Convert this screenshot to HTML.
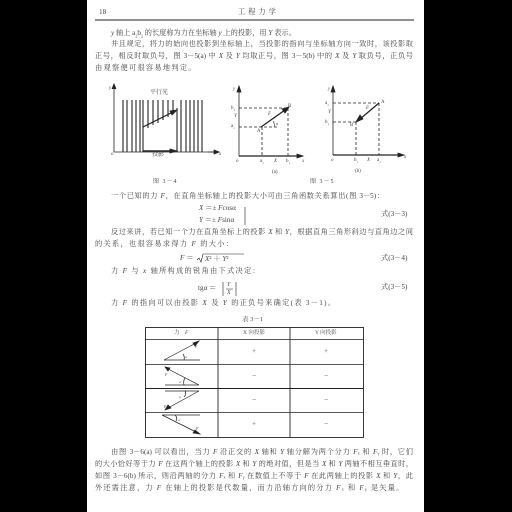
<!DOCTYPE html>
<html><head><meta charset="utf-8"><style>
html,body{margin:0;padding:0;background:#000;width:512px;height:512px;overflow:hidden}
#pg{position:absolute;left:87px;top:0;width:337px;height:512px;background:#fff}
.t{position:absolute;font-family:"Liberation Serif","Noto Serif CJK SC",serif;font-size:7.2px;color:#444;white-space:nowrap;line-height:9px}
.j{text-align:justify;text-align-last:justify;white-space:normal;height:9px;overflow:hidden}
i{font-style:italic}
svg{position:absolute;left:0;top:0}
</style></head><body>
<div id="pg"></div>
<svg width="512" height="512" viewBox="0 0 512 512" fill="none" stroke="#222" stroke-width="0.8">
<line x1="95" y1="20" x2="414" y2="20" stroke-width="1"/>
<line x1="114" y1="152" x2="114" y2="86"/><path d="M112 89 L114 84 L116 89" fill="#222"/>
<line x1="114" y1="152" x2="216" y2="152"/>
<g stroke-width="1.1">
<line x1="123" y1="100" x2="123" y2="152"/><line x1="127" y1="100" x2="127" y2="152"/><line x1="132" y1="100" x2="132" y2="152"/><line x1="136" y1="100" x2="136" y2="152"/><line x1="140" y1="100" x2="140" y2="152"/><line x1="143" y1="100" x2="143" y2="152"/>
<line x1="148" y1="100" x2="148" y2="128"/><line x1="153" y1="100" x2="153" y2="125"/><line x1="158" y1="100" x2="158" y2="123"/><line x1="163" y1="100" x2="163" y2="120"/><line x1="168" y1="100" x2="168" y2="117"/><line x1="173" y1="100" x2="173" y2="114"/>
<line x1="177" y1="108" x2="177" y2="152"/><line x1="181" y1="100" x2="181" y2="152"/><line x1="186" y1="100" x2="186" y2="152"/><line x1="190" y1="100" x2="190" y2="152"/><line x1="194" y1="100" x2="194" y2="152"/><line x1="198" y1="100" x2="198" y2="152"/><line x1="202" y1="100" x2="202" y2="152"/>
</g>
<line x1="143" y1="127" x2="175" y2="111" stroke-width="1.2"/><path d="M177 110 L170 111 L172 115Z" fill="#222"/>
<line x1="143" y1="151" x2="172" y2="151" stroke-width="1.4"/><path d="M177 151 L170 149 L170 153Z" fill="#222"/>
<line x1="208" y1="152" x2="218" y2="152"/><path d="M219 152 L214 150 L214 154Z" fill="#222"/>
<line x1="239" y1="156" x2="239" y2="90"/><path d="M237 92 L239 86 L241 92Z" fill="#222"/>
<line x1="239" y1="156" x2="300" y2="156" stroke-width="1.2"/><path d="M303 156 L297 154 L297 158Z" fill="#222"/>
<g stroke-dasharray="3,2"><line x1="239" y1="108" x2="288" y2="108"/><line x1="239" y1="127" x2="279" y2="127"/><line x1="262" y1="127" x2="262" y2="156"/><line x1="288" y1="108" x2="288" y2="156"/></g>
<line x1="261" y1="127" x2="285" y2="110" stroke-width="1.3"/><path d="M289 107 L282 109 L285 113Z" fill="#222"/>
<path d="M273 121 Q275 124 274 127" stroke-width="0.6"/>
<line x1="333" y1="155" x2="333" y2="90"/><path d="M331 92 L333 86 L335 92Z" fill="#222"/>
<line x1="333" y1="155" x2="400" y2="155" stroke-width="1.2"/><path d="M404 155 L398 153 L398 157Z" fill="#222"/>
<g stroke-dasharray="3,2"><line x1="333" y1="103" x2="379" y2="103"/><line x1="333" y1="122" x2="356" y2="122"/><line x1="356" y1="122" x2="356" y2="155"/><line x1="379" y1="103" x2="379" y2="155"/></g>
<line x1="379" y1="103" x2="360" y2="119" stroke-width="1.3"/><path d="M356 122 L360 115 L363 119Z" fill="#222"/>
<path d="M245 207 L245 225" stroke-width="0.6"/>
<path d="M197 260 L199 258 L201 262 L203 254 L244 254" stroke-width="0.6"/>
<line x1="223" y1="282" x2="223" y2="296" stroke-width="0.6"/><line x1="236" y1="282" x2="236" y2="296" stroke-width="0.6"/><line x1="226" y1="289" x2="233" y2="289" stroke-width="0.5"/>
<rect x="145.5" y="327.5" width="218" height="110" stroke-width="0.9"/>
<line x1="218" y1="327" x2="218" y2="437" stroke-width="0.9"/><line x1="290" y1="327" x2="290" y2="437" stroke-width="0.9"/>
<line x1="145" y1="339.5" x2="363" y2="339.5"/><line x1="145" y1="364.5" x2="363" y2="364.5"/><line x1="145" y1="388.5" x2="363" y2="388.5" stroke-width="1.1"/><line x1="145" y1="412.5" x2="363" y2="412.5"/>
<g stroke-width="0.7">
<line x1="164" y1="360" x2="200" y2="360"/><line x1="164" y1="360" x2="196" y2="343"/><path d="M199 341 L193 343 L195 346Z" fill="#222"/><path d="M183 354 Q185 357 184 360"/>
<line x1="165" y1="385" x2="199" y2="385"/><line x1="199" y1="385" x2="168" y2="369"/><path d="M165 367 L170 368 L168 371Z" fill="#222"/><path d="M185 378 Q183 381 184 385"/>
<line x1="165" y1="391" x2="199" y2="391"/><line x1="199" y1="391" x2="168" y2="408"/><path d="M165 410 L168 405 L171 408Z" fill="#222"/><path d="M185 391 Q187 394 184 397"/>
<line x1="162" y1="415" x2="200" y2="415"/><line x1="162" y1="415" x2="196" y2="432"/><path d="M200 434 L193 433 L195 430Z" fill="#222"/><path d="M175 415 Q178 418 176 421"/>
</g>
</svg>
<div class="t" style="left:99px;top:8px">18</div>
<div class="t" style="left:238px;top:8px;letter-spacing:3px">工程力学</div>
<div class="t" style="left:111px;top:29px"><i>y</i> 轴上 a<sub style="font-size:4px">2</sub>b<sub style="font-size:4px">2</sub> 的长度称为力在坐标轴 <i>y</i> 上的投影，用 <i>Y</i> 表示。</div>
<div class="t j" style="left:111px;top:40px;width:302px">井且规定，将力的始向也投影到坐标轴上，当投影的指向与坐标轴方向一致时，该投影取</div>
<div class="t j" style="left:95px;top:52px;width:318px">正号，相反时取负号，图 3－5(a) 中 <i>X</i> 及 <i>Y</i> 均取正号，图 3－5(b) 中的 <i>X</i> 及 <i>Y</i> 取负号，正负号</div>
<div class="t" style="left:95px;top:64px;letter-spacing:1.3px">由观察便可很容易地判定。</div>
<div class="t" style="left:150px;top:89px;font-size:6px">平行光</div>
<div class="t" style="left:152px;top:151px;font-size:6px">投影</div>
<div class="t" style="left:111px;top:150px;font-size:5px"><i>o</i></div>
<div class="t" style="left:109px;top:84px;font-size:5px"><i>y</i></div>
<div class="t" style="left:219px;top:150px;font-size:5px"><i>x</i></div>
<div class="t" style="left:233px;top:85px;font-size:5px"><i>y</i></div>
<div class="t" style="left:231px;top:104px;font-size:5px">b<sub style="font-size:3px">1</sub></div>
<div class="t" style="left:234px;top:112px;font-size:5px"><i>Y</i></div>
<div class="t" style="left:231px;top:122px;font-size:5px">a<sub style="font-size:3px">1</sub></div>
<div class="t" style="left:257px;top:127px;font-size:5px">A</div>
<div class="t" style="left:288px;top:102px;font-size:5px">B</div>
<div class="t" style="left:268px;top:110px;font-size:5px"><i>F</i></div>
<div class="t" style="left:276px;top:119px;font-size:4px">α</div>
<div class="t" style="left:236px;top:157px;font-size:5px"><i>o</i></div>
<div class="t" style="left:260px;top:157px;font-size:5px">a<sub style="font-size:3px">1</sub></div>
<div class="t" style="left:274px;top:157px;font-size:5px"><i>X</i></div>
<div class="t" style="left:286px;top:157px;font-size:5px">b<sub style="font-size:3px">1</sub></div>
<div class="t" style="left:302px;top:157px;font-size:5px"><i>x</i></div>
<div class="t" style="left:272px;top:168px;font-size:5px">(a)</div>
<div class="t" style="left:328px;top:85px;font-size:5px"><i>y</i></div>
<div class="t" style="left:325px;top:99px;font-size:5px">a<sub style="font-size:3px">1</sub></div>
<div class="t" style="left:328px;top:108px;font-size:5px"><i>Y</i></div>
<div class="t" style="left:325px;top:118px;font-size:5px">b<sub style="font-size:3px">1</sub></div>
<div class="t" style="left:381px;top:98px;font-size:5px">A</div>
<div class="t" style="left:350px;top:121px;font-size:5px">B</div>
<div class="t" style="left:366px;top:104px;font-size:5px"><i>F</i></div>
<div class="t" style="left:331px;top:156px;font-size:5px"><i>o</i></div>
<div class="t" style="left:354px;top:156px;font-size:5px">b<sub style="font-size:3px">1</sub></div>
<div class="t" style="left:367px;top:156px;font-size:5px"><i>X</i></div>
<div class="t" style="left:377px;top:156px;font-size:5px">a<sub style="font-size:3px">1</sub></div>
<div class="t" style="left:404px;top:153px;font-size:5px"><i>x</i></div>
<div class="t" style="left:355px;top:167px;font-size:5px">(b)</div>
<div class="t" style="left:153px;top:178px;font-size:6px;letter-spacing:1px">图 3－4</div>
<div class="t" style="left:310px;top:178px;font-size:6px;letter-spacing:1px">图 3－5</div>
<div class="t j" style="left:111px;top:192px;width:273px">一个已知的力 <i>F</i>，在直角坐标轴上的投影大小可由三角函数关系算出(图 3－5)：</div>
<div class="t" style="left:199px;top:204px"><i>X</i> ＝± <i>F</i>cosα</div>
<div class="t" style="left:199px;top:216px"><i>Y</i> ＝± <i>F</i>sinα</div>
<div class="t" style="left:381px;top:210px">式(3－3)</div>
<div class="t j" style="left:111px;top:228px;width:302px">反过来讲，若已知一个力在直角坐标上的投影 <i>X</i> 和 <i>Y</i>，根据直角三角形斜边与直角边之间</div>
<div class="t" style="left:95px;top:240px;letter-spacing:1.3px">的关系，也很容易求得力 <i>F</i> 的大小：</div>
<div class="t" style="left:180px;top:254px"><i>F</i> ＝ </div>
<div class="t" style="left:205px;top:255px"><i>X</i>² ＋ <i>Y</i>²</div>
<div class="t" style="left:381px;top:254px">式(3－4)</div>
<div class="t" style="left:111px;top:267px;letter-spacing:1.3px">力 <i>F</i> 与 <i>x</i> 轴所构成的锐角由下式决定：</div>
<div class="t" style="left:198px;top:284px">tgα ＝</div>
<div class="t" style="left:227px;top:281px;font-size:6px"><i>Y</i></div>
<div class="t" style="left:227px;top:289px;font-size:6px"><i>X</i></div>
<div class="t" style="left:381px;top:283px">式(3－5)</div>
<div class="t" style="left:111px;top:299px;letter-spacing:1.3px">力 <i>F</i> 的指向可以由投影 <i>X</i> 及 <i>Y</i> 的正负号来确定(表 3－1)。</div>
<div class="t" style="left:242px;top:315px;font-size:6.5px">表 3－1</div>
<div class="t" style="left:174px;top:329px;font-size:5.5px">力　<i>F</i></div>
<div class="t" style="left:243px;top:329px;font-size:5.5px">X 向投影</div>
<div class="t" style="left:315px;top:329px;font-size:5.5px">Y 向投影</div>
<div class="t" style="left:252px;top:347px">+</div><div class="t" style="left:324px;top:347px">+</div>
<div class="t" style="left:252px;top:372px">−</div><div class="t" style="left:324px;top:372px">−</div>
<div class="t" style="left:252px;top:396px">−</div><div class="t" style="left:324px;top:396px">−</div>
<div class="t" style="left:252px;top:420px">+</div><div class="t" style="left:324px;top:420px">−</div>
<div class="t" style="left:195px;top:342px;font-size:4px"><i>F</i></div><div class="t" style="left:185px;top:353px;font-size:3.5px">α</div>
<div class="t" style="left:165px;top:370px;font-size:4px"><i>F</i></div><div class="t" style="left:179px;top:378px;font-size:3.5px">α</div>
<div class="t" style="left:164px;top:402px;font-size:4px"><i>F</i></div><div class="t" style="left:179px;top:393px;font-size:3.5px">α</div>
<div class="t" style="left:196px;top:424px;font-size:4px"><i>F</i></div><div class="t" style="left:178px;top:416px;font-size:3.5px">α</div>
<div class="t j" style="left:111px;top:448px;width:302px">由图 3－6(a) 可以看出，当力 <i>F</i> 沿正交的 <i>X</i> 轴和 <i>Y</i> 轴分解为两个分力 <i>F</i>ₓ 和 <i>F</i>ᵧ 时，它们</div>
<div class="t j" style="left:95px;top:460px;width:318px">的大小恰好等于力 <i>F</i> 在这两个轴上的投影 <i>X</i> 和 <i>Y</i> 的绝对值，但是当 <i>X</i> 和 <i>Y</i> 两轴不相互垂直时，</div>
<div class="t j" style="left:95px;top:472px;width:318px">如图 3－6(b) 所示，则沿两轴的分力 <i>F</i>ₓ 和 <i>F</i>ᵧ 在数值上不等于 <i>F</i> 在此两轴上的投影 <i>X</i> 和 <i>Y</i>，此</div>
<div class="t" style="left:95px;top:484px;letter-spacing:1.2px">外还需注意，力 <i>F</i> 在轴上的投影是代数量，而力沿轴方向的分力 <i>F</i>ₓ 和 <i>F</i>ᵧ 是矢量。</div>
</body></html>
